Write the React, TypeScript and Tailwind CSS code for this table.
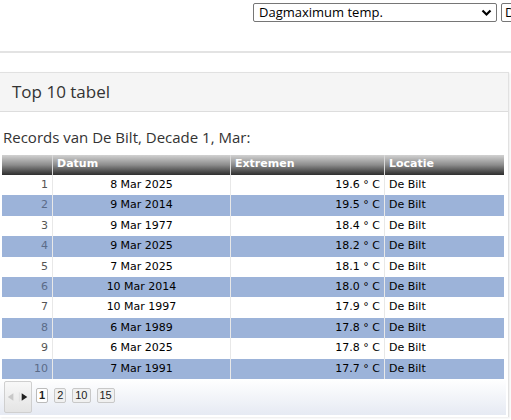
import React from 'react';

const rows = [
  { n: 1, date: '8 Mar 2025', val: '19.6 ° C', loc: 'De Bilt' },
  { n: 2, date: '9 Mar 2014', val: '19.5 ° C', loc: 'De Bilt' },
  { n: 3, date: '9 Mar 1977', val: '18.4 ° C', loc: 'De Bilt' },
  { n: 4, date: '9 Mar 2025', val: '18.2 ° C', loc: 'De Bilt' },
  { n: 5, date: '7 Mar 2025', val: '18.1 ° C', loc: 'De Bilt' },
  { n: 6, date: '10 Mar 2014', val: '18.0 ° C', loc: 'De Bilt' },
  { n: 7, date: '10 Mar 1997', val: '17.9 ° C', loc: 'De Bilt' },
  { n: 8, date: '6 Mar 1989', val: '17.8 ° C', loc: 'De Bilt' },
  { n: 9, date: '6 Mar 2025', val: '17.8 ° C', loc: 'De Bilt' },
  { n: 10, date: '7 Mar 1991', val: '17.7 ° C', loc: 'De Bilt' },
];

export default function App() {
  return (
    <div className="w-[511px] h-[420px] overflow-hidden bg-white font-['Open_Sans',sans-serif] text-[#333]">
      {/* top selects */}
      <div className="h-[53px] flex justify-end items-start pt-[3px] gap-[4px] -mr-[20px] border-b-2 border-[#e3e3e3]">
        <div className="w-[244px] h-[19px] border border-[#767676] rounded-[2px] flex items-center justify-between pl-[5px] pr-[4px] text-[13px] text-black">
          <span>Dagmaximum temp.</span>
          <svg width="11" height="8" viewBox="0 0 11 8"><path d="M1.5 1.5 L5.5 5.5 L9.5 1.5" stroke="#000" strokeWidth="2.2" fill="none" /></svg>
        </div>
        <div className="w-[30px] h-[19px] border border-[#767676] rounded-[2px] pl-[3px] text-[13px] text-black leading-[17px]">D</div>
      </div>

      {/* panel */}
      <div className="mt-[19px] w-[509px] h-[345px] border-t border-r border-[#e1e1e1] shadow-[1px_1px_2px_rgba(0,0,0,0.08)]">
        <div className="h-[39px] bg-[#f5f5f5] border-b border-[#dddddd] flex items-center pl-[12px] text-[17px] text-[#333]">
          Top 10 tabel
        </div>
        <div className="pt-[15px] pl-[3px] text-[15px] leading-[20px] text-[#333]">Records van De Bilt, Decade 1, Mar:</div>
        <div className="mt-[8px] ml-[2px] w-[502px] font-['DejaVu_Sans',Verdana,sans-serif] text-[11px]">
          <div className="grid grid-cols-[51px_178px_154px_119px] h-[20px] bg-gradient-to-b from-[#d2d2d2] via-[#8c8c8c] to-[#2e2e2e] text-white font-bold">
            <div className="border-r border-[#d9d9d9]" />
            <div className="border-r border-[#d9d9d9] pl-[4px] leading-[18px]">Datum</div>
            <div className="border-r border-[#d9d9d9] pl-[4px] leading-[18px]">Extremen</div>
            <div className="pl-[4px] leading-[18px]">Locatie</div>
          </div>
          {rows.map((r) => (
            <div
              key={r.n}
              className={
                'grid grid-cols-[51px_178px_154px_119px] h-[20.4px] leading-[20px] text-black ' +
                (r.n % 2 === 0 ? 'bg-[#9cb3d9]' : 'bg-white')
              }
            >
              <div className={'border-r border-[#e8e8e8] text-right pr-[4px] ' + (r.n % 2 === 0 ? 'text-[#5b6b88]' : 'text-[#555]')}>{r.n}</div>
              <div className="border-r border-[#e8e8e8] text-center">{r.date}</div>
              <div className="border-r border-[#e8e8e8] text-right pr-[4px]">{r.val}</div>
              <div className="pl-[4px]">{r.loc}</div>
            </div>
          ))}
          {/* pager */}
          <div className="-ml-[2px] w-[506px] h-[36px] bg-gradient-to-b from-white to-[#e6eaf3] flex items-start pl-[4px] gap-[4px] font-['Liberation_Sans',Arial,sans-serif]">
            <div className="h-[32px] w-[28px] mt-[2px] border border-[#cfcfcf] rounded-[2px] bg-gradient-to-b from-[#f8f8f8] to-[#e4e4e4] flex items-center">
              <svg width="28" height="10" viewBox="0 0 28 10">
                <path d="M9 1 L3 5 L9 9 Z" fill="#c8c8c8" />
                <line x1="15.5" y1="0" x2="15.5" y2="10" stroke="#e0e0e0" />
                <path d="M18 1 L24 5 L18 9 Z" fill="#222" />
              </svg>
            </div>
            <div className="flex gap-[6px] text-[11px] text-[#222] mt-[9px]">
              <span className="h-[15px] px-[2px] border border-[#bbb] bg-white rounded-[2px] font-bold leading-[13px]">1</span>
              <span className="h-[15px] px-[2px] border border-[#c8c8c8] bg-[#f0f0f0] rounded-[2px] leading-[13px]">2</span>
              <span className="h-[15px] px-[2px] border border-[#c8c8c8] bg-[#f0f0f0] rounded-[2px] leading-[13px]">10</span>
              <span className="h-[15px] px-[2px] border border-[#c8c8c8] bg-[#f0f0f0] rounded-[2px] leading-[13px]">15</span>
            </div>
          </div>
        </div>
      </div>
    </div>
  );
}
